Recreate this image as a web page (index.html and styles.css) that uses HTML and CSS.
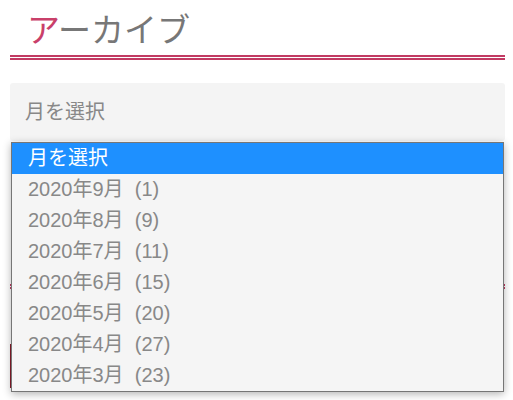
FILE: index.html
```html
<!DOCTYPE html>
<html lang="ja">
<head>
  <meta charset="UTF-8">
  <title>アーカイブ</title>
  <link rel="stylesheet" href="styles.css">
</head>
<body>

  <div class="widget">
    <h2 class="widget-title"><span class="first">ア</span>ーカイブ</h2>

    <!-- archive dropdown (opened) -->
    <div class="select-wrap">
      <div class="select-box">月を選択</div>
      <ul class="dropdown">
        <li class="selected">月を選択</li>
        <li>2020年9月 &nbsp;(1)</li>
        <li>2020年8月 &nbsp;(9)</li>
        <li>2020年7月 &nbsp;(11)</li>
        <li>2020年6月 &nbsp;(15)</li>
        <li>2020年5月 &nbsp;(20)</li>
        <li>2020年4月 &nbsp;(27)</li>
        <li>2020年3月 &nbsp;(23)</li>
      </ul>
    </div>
  </div>

  <!-- next widget, hidden under the open list -->
  <div class="widget next">
    <div class="title-rule"></div>
    <div class="cat-box"></div>
  </div>

</body>
</html>
```

FILE: styles.css
```css
html, body {
  min-height: 400px;
}
body {
  margin: 0;
  padding: 0 8px 0 10px;
  font-family: "Liberation Sans", Arial, "Noto Sans CJK JP", sans-serif;
  background: #fff;
  overflow: hidden;
}
.widget-title {
  margin: 0;
  padding: 9px 0 8px 17px;
  font-family: "Noto Sans CJK JP", sans-serif;
  font-weight: 400;
  font-size: 33px;
  line-height: 38px;
  color: #777;
  border-bottom: 5px double #c23a63;
}
.widget-title .first {
  color: #c9406a;
}
.select-wrap {
  position: relative;
  margin-top: 23px;
}
.select-box {
  height: 58px;
  line-height: 58px;
  padding-left: 15px;
  background: #f4f4f4;
  border-radius: 3px;
  font-size: 20px;
  color: #888;
}
.dropdown {
  position: absolute;
  top: 59px;
  left: 1px;
  right: 1px;
  z-index: 10;
  margin: 0;
  padding: 0;
  list-style: none;
  background: #f5f5f5;
  border: 1px solid #767676;
  box-shadow: 0 2px 8px rgba(0, 0, 0, 0.3);
}
.dropdown li {
  height: 31px;
  line-height: 31px;
  padding-left: 16px;
  font-size: 20px;
  color: #888;
  overflow: hidden;
}
.dropdown li.selected {
  background: #1e90ff;
  color: #fff;
}
.next {
  margin-top: 143px;
}
.title-rule {
  border-bottom: 5px double #c23a63;
}
.cat-box {
  margin-top: 55px;
  height: 44px;
  border-left: 2px solid #8b1c2c;
}
```
